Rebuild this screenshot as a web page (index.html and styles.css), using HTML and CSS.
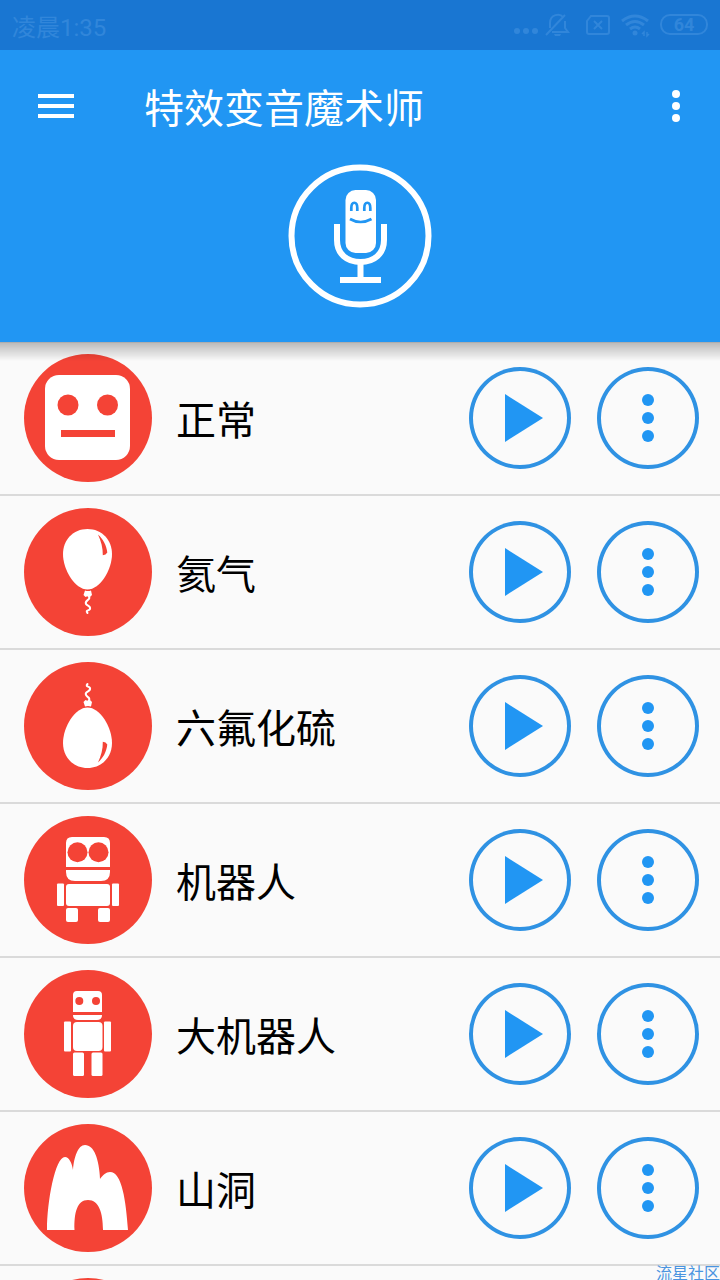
FILE: index.html
```html
<!DOCTYPE html>
<html lang="zh-CN">
<head>
<meta charset="utf-8">
<meta name="viewport" content="width=device-width, initial-scale=1">
<title>特效变音魔术师</title>
<link rel="stylesheet" href="styles.css">
</head>
<body>
<svg class="defs" aria-hidden="true">
  <symbol id="play" viewBox="0 0 102 102"><path d="M36 27 74 51 36 75Z"/></symbol>
  <symbol id="dots" viewBox="0 0 102 102"><circle cx="51" cy="33" r="6"/><circle cx="51" cy="51" r="6"/><circle cx="51" cy="69" r="6"/></symbol>
  <symbol id="balloon" viewBox="0 0 128 128">
    <path fill="#fff" d="M63.500 21C78 21 88 32 88 46C88 62 76 81.500 63.500 81.500S39 62 39 46C39 32 49 21 63.500 21Z"/>
    <path fill="#f44336" d="M74 26.500C79 31 82.500 37 83.300 44.500Q82 47 78.800 47.300C79 40 77 33 74 26.500Z"/>
    <path fill="#fff" d="M61 82.500Q64 83.500 67 82.500L68 87 66 89 64 88 61.500 89 59.500 87Z"/>
    <path fill="none" stroke="#fff" stroke-width="2" stroke-linecap="round" d="M64.500 88C68 92 60 92 62 96C63 98 67 98 66 101C65 103 61 102 63.500 105"/>
  </symbol>
</svg>
<div class="app">
  <header class="header">
    <div class="status">
      <span>凌晨1:35</span>
      <svg class="status-icons" viewBox="0 0 200 50" aria-hidden="true">
        <g fill="currentColor"><circle cx="7" cy="31" r="3"/><circle cx="16" cy="31" r="3"/><circle cx="25" cy="31" r="3"/><path d="M44 34h7l-1 2h-5Z"/><circle cx="125" cy="33" r="2.500"/></g>
        <g fill="none" stroke="currentColor" stroke-width="2">
          <path d="M55 15 36 35M40 28V23C40 14 50 13 53 17M55 21V28L58 32H42"/>
          <path d="M81 16H97Q99 16 99 18V32Q99 34 97 34H79Q77 34 77 32V21ZM84 21 92 29M92 21 84 29"/>
          <path stroke-width="3" d="M112 21Q125 11 138 21M116 25Q125 18 134 25M120 29Q125 25 130 29"/>
          <path stroke-width="1.500" d="M134 36V32L132 34M137 32V36L139 34"/>
          <rect x="151" y="15" width="46" height="19" rx="9"/>
        </g>
        <text class="battery" x="174" y="31" text-anchor="middle">64</text>
      </svg>
    </div>
    <div class="toolbar">
      <button class="tool" aria-label="菜单"><svg viewBox="0 0 48 48"><path d="M6 12H42V16H6ZM6 22H42V26H6ZM6 32H42V36H6Z"/></svg></button>
      <h1 class="title">特效变音魔术师</h1>
      <button class="tool" aria-label="更多"><svg viewBox="0 0 48 48"><circle cx="24" cy="12" r="4"/><circle cx="24" cy="24" r="4"/><circle cx="24" cy="36" r="4"/></svg></button>
    </div>
    <button class="record" aria-label="录音">
      <svg viewBox="0 0 144 144">
        <circle cx="72" cy="72" r="68.500" fill="none" stroke="#fff" stroke-width="6"/>
        <rect x="57.500" y="26" width="30.500" height="63" rx="10" fill="#fff"/>
        <g fill="none" stroke="#2196f3" stroke-width="2.700"><path d="M63.300 47V44C63.300 37 69.300 37 69.300 44V47M76.300 47V44C76.300 37 82.300 37 82.300 44V47"/><path d="M62 55Q72.500 61 83.500 55"/></g>
        <path fill="none" stroke="#fff" stroke-width="6" d="M49 60V76C49 90 59 98 72.500 98S96 90 96 76V60M72.500 98V116M52 116H93"/>
      </svg>
    </button>
  </header>
  <ul class="list">
    <li class="row">
      <svg class="avatar" viewBox="0 0 128 128" aria-hidden="true"><rect x="21" y="21" width="85" height="85" rx="14" fill="#fff"/><g fill="#f44336"><circle cx="44" cy="51" r="10.500"/><circle cx="83.500" cy="51" r="10.500"/><path d="M37 76H91V83H37Z"/></g></svg>
      <span class="name">正常</span>
      <button class="round" aria-label="播放 正常"><svg><use href="#play"/></svg></button>
      <button class="round" aria-label="选项 正常"><svg><use href="#dots"/></svg></button>
    </li>
    <li class="row">
      <svg class="avatar" viewBox="0 0 128 128" aria-hidden="true"><use href="#balloon"/></svg>
      <span class="name">氦气</span>
      <button class="round" aria-label="播放 氦气"><svg><use href="#play"/></svg></button>
      <button class="round" aria-label="选项 氦气"><svg><use href="#dots"/></svg></button>
    </li>
    <li class="row">
      <svg class="avatar" viewBox="0 0 128 128" aria-hidden="true"><g transform="matrix(1 0 0 -1 0 127)"><use href="#balloon" width="128" height="128"/></g></svg>
      <span class="name">六氟化硫</span>
      <button class="round" aria-label="播放 六氟化硫"><svg><use href="#play"/></svg></button>
      <button class="round" aria-label="选项 六氟化硫"><svg><use href="#dots"/></svg></button>
    </li>
    <li class="row">
      <svg class="avatar" viewBox="0 0 128 128" aria-hidden="true"><g fill="#fff"><path d="M42 51V27Q42 21 48 21H80Q86 21 86 27V51ZM42 54H86V56Q86 65 77 65H51Q42 65 42 56Z"/><rect x="42" y="68" width="44" height="22" rx="3"/><rect x="33" y="67.500" width="7" height="22.500" rx="1"/><rect x="88" y="67.500" width="7" height="22.500" rx="1"/><rect x="42" y="92" width="12" height="14" rx="2"/><rect x="74" y="92" width="12" height="14" rx="2"/></g><g fill="#f44336"><circle cx="53.500" cy="36.300" r="10"/><circle cx="74.500" cy="36.300" r="10"/></g></svg>
      <span class="name">机器人</span>
      <button class="round" aria-label="播放 机器人"><svg><use href="#play"/></svg></button>
      <button class="round" aria-label="选项 机器人"><svg><use href="#dots"/></svg></button>
    </li>
    <li class="row">
      <svg class="avatar" viewBox="0 0 128 128" aria-hidden="true"><g fill="#fff"><path d="M49 42V25Q49 21 53 21H74Q78 21 78 25V42ZM49 45H78Q78 50 73 50H54Q49 50 49 45Z"/><rect x="49" y="52" width="29.500" height="29" rx="4"/><rect x="40" y="51.500" width="7" height="30" rx="1"/><rect x="80" y="51.500" width="7" height="30" rx="1"/><rect x="49" y="82.500" width="11" height="23.500" rx="1.500"/><rect x="67.500" y="82.500" width="11" height="23.500" rx="1.500"/></g><g fill="#f44336"><circle cx="55.300" cy="31" r="4"/><circle cx="72" cy="31" r="4"/></g></svg>
      <span class="name">大机器人</span>
      <button class="round" aria-label="播放 大机器人"><svg><use href="#play"/></svg></button>
      <button class="round" aria-label="选项 大机器人"><svg><use href="#dots"/></svg></button>
    </li>
    <li class="row">
      <svg class="avatar" viewBox="0 0 128 128" aria-hidden="true"><path fill="#fff" d="M23 106C23 78 31 33 41 33C45 33 48 39 49 46C50 33 54 21 61 21C70 21 75 35 76 55C79 51 82 48 86 48C98 48 102 77 104 106H79C79 89 75 76 64 76S50 89 50.500 106Z"/></svg>
      <span class="name">山洞</span>
      <button class="round" aria-label="播放 山洞"><svg><use href="#play"/></svg></button>
      <button class="round" aria-label="选项 山洞"><svg><use href="#dots"/></svg></button>
    </li>
    <li class="row"><svg class="avatar" viewBox="0 0 128 128" aria-hidden="true"></svg></li>
  </ul>
  <div class="watermark">流星社区</div>
</div>
</body>
</html>
```
FILE: styles.css
```css
* {
  box-sizing: border-box;
}

body {
  margin: 0;
  background: #fafafa;
  color: #000;
  font-family: "Noto Sans CJK SC", sans-serif;
}

button {
  padding: 0;
  border: 0;
  background: none;
  color: inherit;
  cursor: pointer;
}

svg {
  display: block;
}

.defs {
  position: absolute;
  width: 0;
  height: 0;
}

.app {
  position: relative;
  display: flex;
  flex-direction: column;
  height: 100vh;
  overflow: hidden;
}

.header {
  position: relative;
  flex: none;
  padding-bottom: 34px;
  background: #2196f3;
  color: #fff;
}

.header::after {
  content: "";
  position: absolute;
  z-index: 1;
  top: 100%;
  left: 0;
  right: 0;
  height: 18px;
  border-top: 1px solid rgba(0, 0, 0, 0.3);
  background: linear-gradient(rgba(0, 0, 0, 0.25), transparent);
  pointer-events: none;
}

.status {
  display: flex;
  align-items: center;
  justify-content: space-between;
  height: 50px;
  padding: 0 10px 0 12px;
  background: #1976d2;
  color: #3186da;
  font-family: Roboto, "Noto Sans CJK SC", sans-serif;
  font-size: 24px;
}

.status-icons {
  width: 200px;
  height: 50px;
}

.battery {
  fill: currentColor;
  font-size: 18px;
  font-weight: 700;
}

.toolbar {
  display: flex;
  align-items: center;
  height: 112px;
  padding: 0 20px 0 32px;
}

.tool {
  flex: none;
  width: 48px;
  height: 48px;
}

.tool svg {
  width: 48px;
  height: 48px;
  fill: #fff;
}

.title {
  flex: 1;
  margin: 0;
  padding-left: 64px;
  font-size: 40px;
  font-weight: 400;
  line-height: 48px;
}

.record {
  display: block;
  width: 144px;
  height: 144px;
  margin: 2px auto 0;
}

.list {
  flex: 1;
  min-height: 0;
  margin: 0;
  padding: 0;
  overflow-y: auto;
  scrollbar-width: none;
  list-style: none;
}

.row {
  display: flex;
  align-items: center;
  padding: 12px 21px 12px 24px;
  border-bottom: 2px solid #dadada;
}

.avatar {
  flex: none;
  width: 128px;
  height: 128px;
  border-radius: 50%;
  background: #f44336;
}

.name {
  flex: 1;
  padding-left: 24px;
  font-size: 40px;
  line-height: 48px;
}

.round {
  flex: none;
  width: 102px;
  height: 102px;
  border-radius: 50%;
  box-shadow: inset 0 0 0 4px #2f92e3;
  color: #2196f3;
}

.round + .round {
  margin-left: 26px;
}

.round svg {
  width: 102px;
  height: 102px;
  fill: currentColor;
}

.watermark {
  position: absolute;
  right: 0;
  bottom: 0;
  color: #4a94e0;
  font-size: 16px;
  line-height: 16px;
}
```
